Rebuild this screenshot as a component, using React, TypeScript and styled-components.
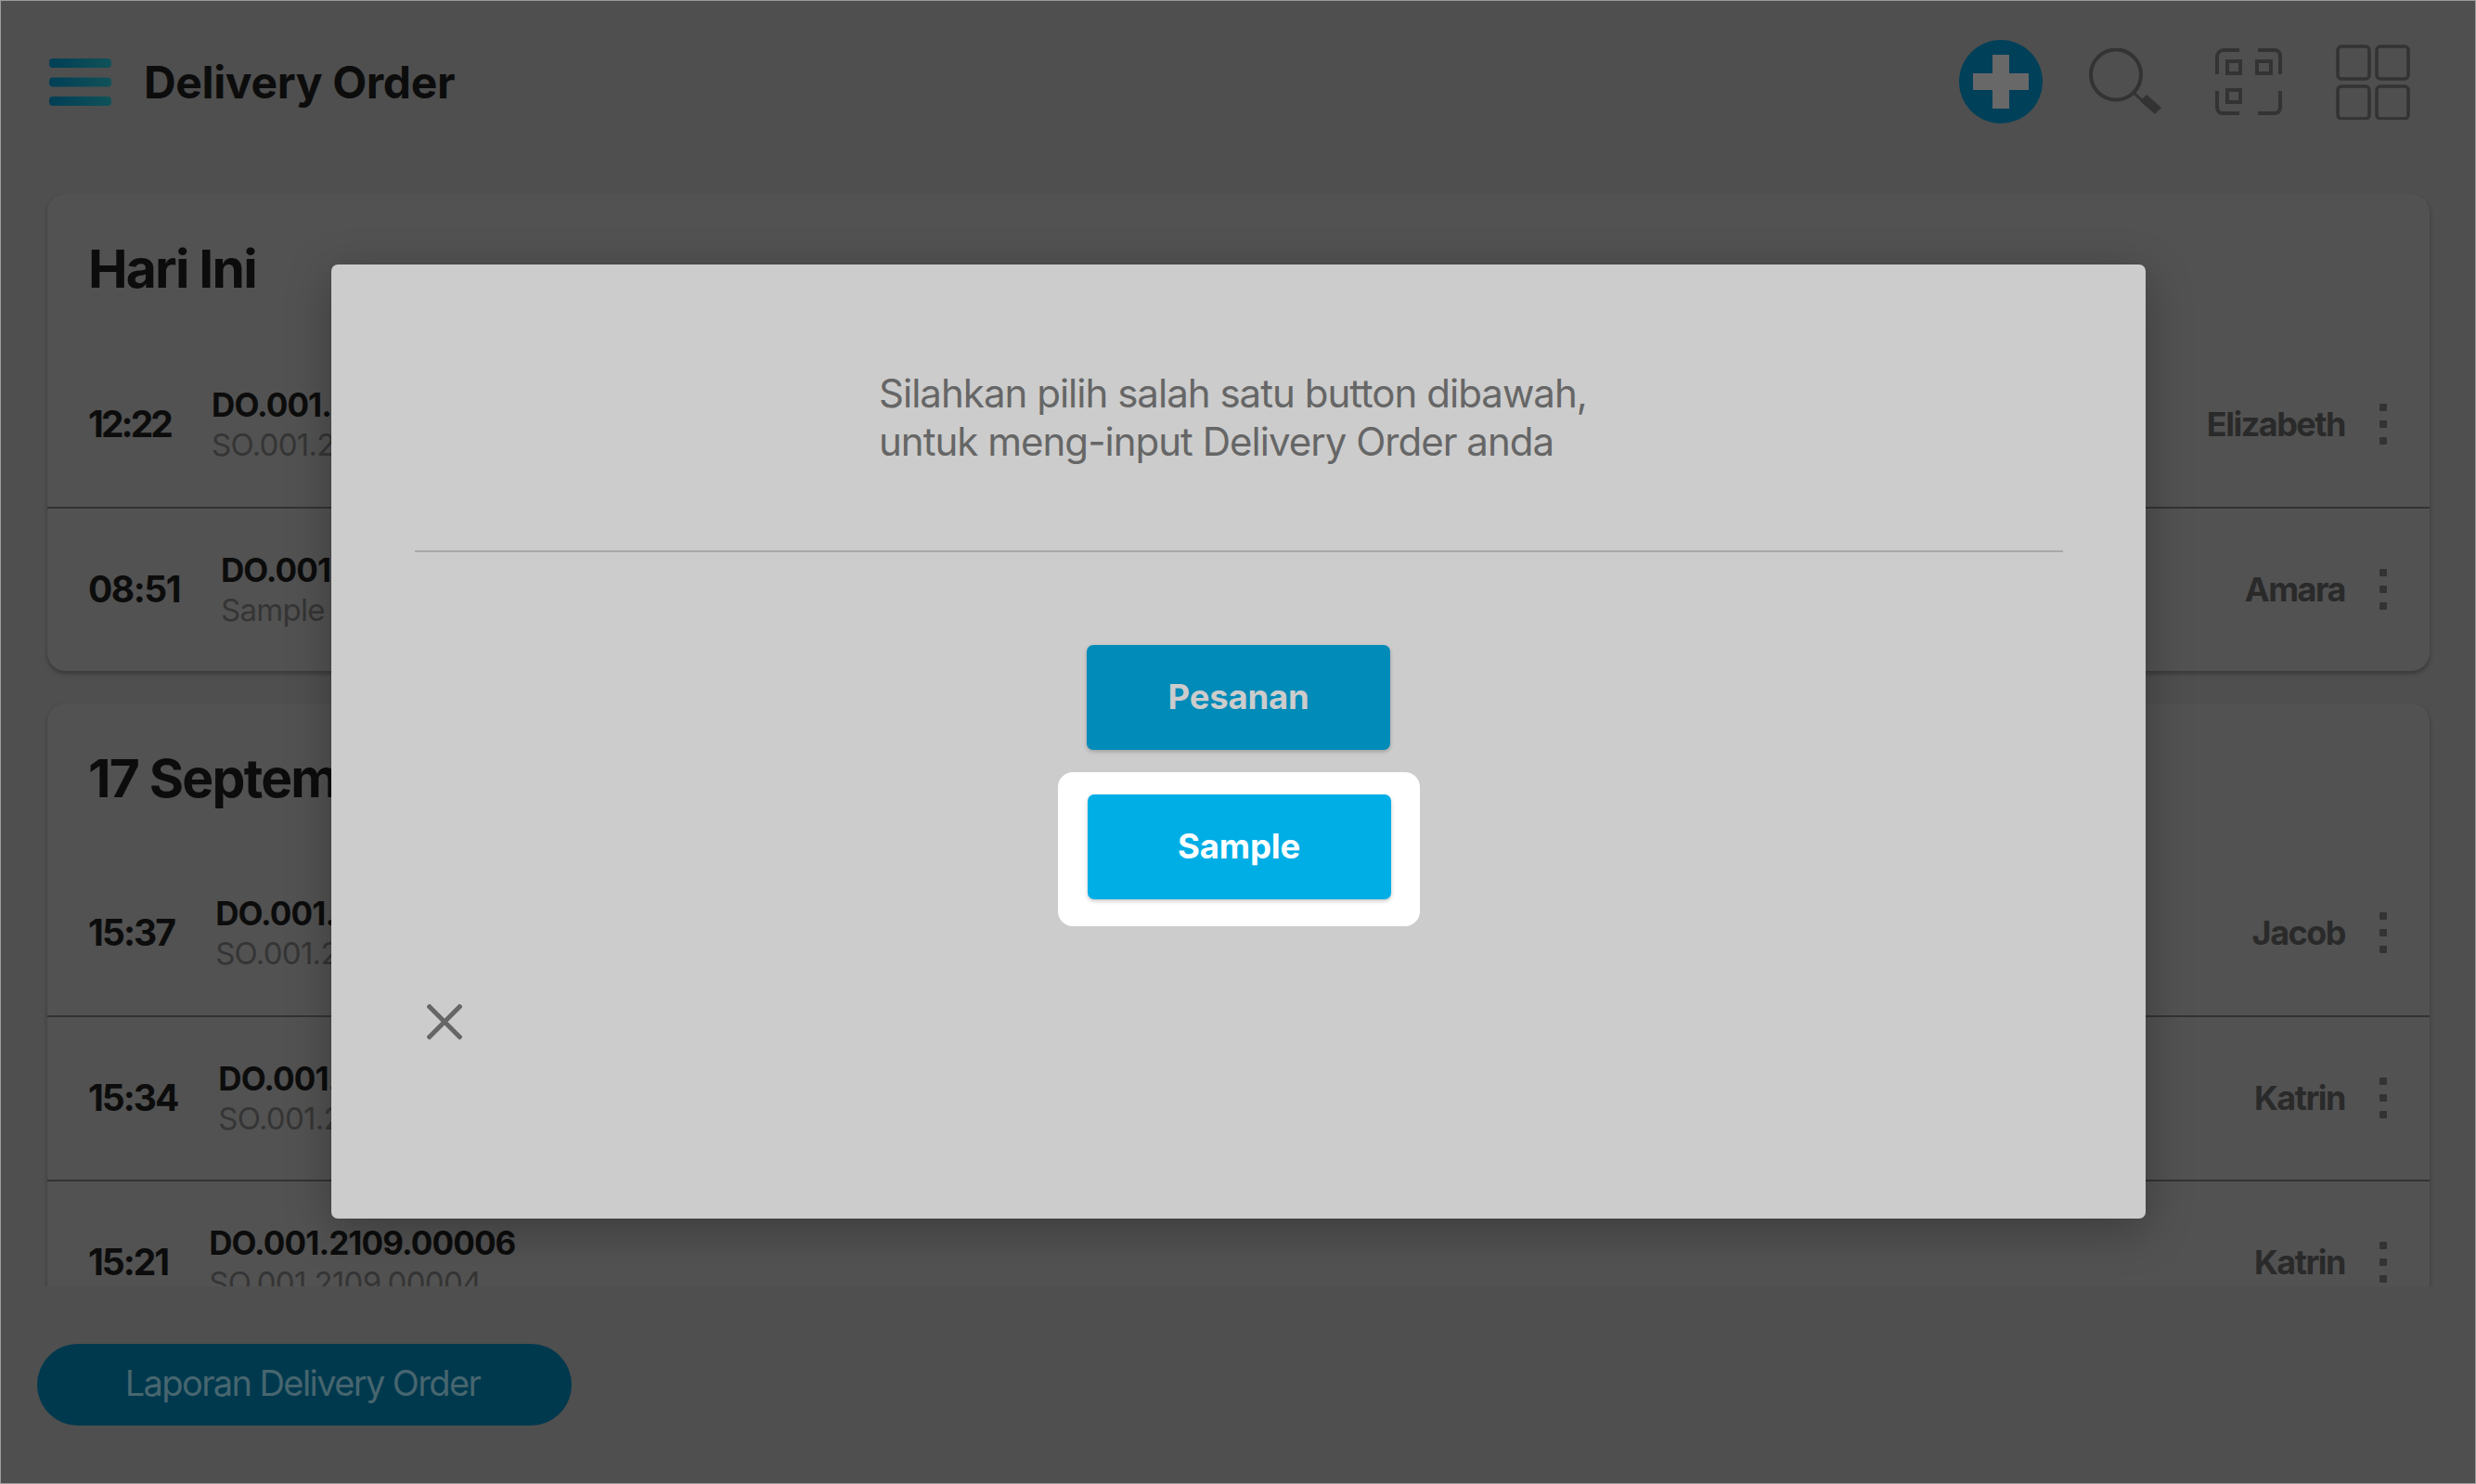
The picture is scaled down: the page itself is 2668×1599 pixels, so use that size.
import { createGlobalStyle, styled } from "styled-components";

const GlobalStyle = createGlobalStyle`
    html, body {
        margin: 0;
        padding: 0;
    }
    body {
        font-family: Inter, "Liberation Sans", sans-serif;
    }
`;

const Page = styled.div`
    position: relative;
    width: 2668px;
    height: 1599px;
    overflow: hidden;
    display: flex;
    flex-direction: column;
    background-color: #4f4f4f;
    box-shadow: inset 0 0 0 1px #9c9c9c;
`;
const Header = styled.header`
    height: 209px;
    flex-shrink: 0;
    display: flex;
    align-items: flex-start;
    justify-content: space-between;
    padding: 43px 71px 0 53px;
    box-sizing: border-box;
`;
const HeaderLeft = styled.div`
    display: flex;
    align-items: center;
    gap: 35px;
    height: 90px;
`;
const Title = styled.h1`
    margin: 0;
    font-size: 48px;
    font-weight: 700;
    letter-spacing: -0.35px;
    color: #0c0c0c;
`;
const HeaderIcons = styled.div`
    display: flex;
    align-items: center;
    height: 90px;
    gap: 58px;
`;
const PlusIcon = styled.svg`
    margin-right: -9px;
`;
const List = styled.div`
    height: 1177px;
    flex-shrink: 0;
    overflow: hidden;
    display: flex;
    flex-direction: column;
    gap: 35px;
    padding: 0 50px 0 51px;
`;
const Card = styled.section`
    flex-shrink: 0;
    background-color: #525252;
    border-radius: 20px;
    box-shadow: 0 3px 5px rgba(0, 0, 0, 0.28);
`;
const CardTitle = styled.h2<{ $height: number }>`
    margin: 0;
    height: ${(p) => p.$height}px;
    box-sizing: border-box;
    padding: 48px 0 0 44px;
    font-size: 57px;
    line-height: 66px;
    font-weight: 700;
    letter-spacing: -1.8px;
    color: #0c0c0c;
    white-space: nowrap;
`;
const Row = styled.div`
    height: 177px;
    box-sizing: border-box;
    display: flex;
    align-items: center;
    padding: 0 46px 0 44px;
    border-top: 2px solid #333;
    &:first-of-type {
        border-top: none;
    }
`;
const Time = styled.span<{ $spacing: number }>`
    font-size: 39px;
    font-weight: 700;
    letter-spacing: ${(p) => p.$spacing}px;
    color: #0c0c0c;
    margin: 0 44px 2px 0;
`;
const RowText = styled.div`
    flex: 1;
    display: flex;
    flex-direction: column;
    gap: 1px;
`;
const DoNumber = styled.span`
    font-size: 35px;
    line-height: 42px;
    font-weight: 700;
    letter-spacing: -0.9px;
    color: #0c0c0c;
`;
const SoNumber = styled.span`
    font-size: 33px;
    line-height: 42px;
    letter-spacing: -0.7px;
    color: #353535;
`;
const Person = styled.span`
    font-size: 36px;
    font-weight: 700;
    letter-spacing: -1.5px;
    color: #2a2a2a;
    margin: 0 37px 1px 0;
`;
const Dots = styled.div`
    display: flex;
    flex-direction: column;
    gap: 10px;
    margin-bottom: 2px;
    span {
        width: 8px;
        height: 8px;
        border-radius: 1px;
        background-color: #333;
    }
`;
const Footer = styled.footer`
    flex: 1;
    display: flex;
    align-items: flex-start;
    padding: 62px 0 0 40px;
`;
const ReportButton = styled.button`
    width: 576px;
    height: 88px;
    border: none;
    border-radius: 44px;
    background-color: #00394e;
    color: #47666f;
    font-family: inherit;
    font-size: 38px;
    letter-spacing: -1.6px;
    padding: 0 4px 5px 0;
`;
const Overlay = styled.div`
    position: absolute;
    inset: 0;
    padding: 285px 0 0 357px;
`;
const Modal = styled.div`
    width: 1955px;
    height: 1028px;
    box-sizing: border-box;
    display: flex;
    flex-direction: column;
    align-items: center;
    padding-top: 113px;
    background-color: #cccccc;
    border-radius: 7px;
    box-shadow: 0 12px 50px rgba(0, 0, 0, 0.28);
`;
const Message = styled.p`
    margin: 0;
    align-self: flex-start;
    padding-left: 590px;
    font-size: 42px;
    line-height: 52px;
    letter-spacing: -0.98px;
    color: #666;
`;
const Divider = styled.hr`
    width: 1776px;
    height: 2px;
    margin: 91px 0 100px;
    border: none;
    background-color: #a8a8a8;
`;
const ChoiceButton = styled.button<{ $active?: boolean }>`
    width: 327px;
    height: 113px;
    padding: 0 0 2px;
    border: none;
    border-radius: 7px;
    background-color: ${(p) => (p.$active ? "#00aee6" : "#008bb8")};
    color: ${(p) => (p.$active ? "#fff" : "#cccccc")};
    font-family: inherit;
    font-size: 36.5px;
    font-weight: 700;
    letter-spacing: -0.2px;
    box-shadow: 0 2px 4px rgba(0, 0, 0, 0.22);
`;
const Highlight = styled.div`
    margin-top: 24px;
    padding: 24px 31px 29px 32px;
    display: flex;
    background-color: #fff;
    border-radius: 16px;
`;
const CloseButton = styled.button`
    align-self: flex-start;
    margin: 81px 0 0 100px;
    width: 44px;
    height: 44px;
    padding: 0;
    border: none;
    background: none;
    color: #666;
    display: flex;
    align-items: center;
    justify-content: center;
`;

const rows = [
    {
        title: "Hari Ini",
        height: 160,
        items: [
            { time: "12:22", spacing: -2.9, no: "DO.001.2109.00008", sub: "SO.001.2109.00006", name: "Elizabeth" },
            { time: "08:51", spacing: -1.5, no: "DO.001.2109.00007", sub: "Sample", name: "Amara" },
        ],
    },
    {
        title: "17 September 2021",
        height: 159,
        items: [
            { time: "15:37", spacing: -1.9, no: "DO.001.2109.00006", sub: "SO.001.2109.00005", name: "Jacob" },
            { time: "15:34", spacing: -2, no: "DO.001.2109.00005", sub: "SO.001.2109.00004", name: "Katrin" },
            { time: "15:21", spacing: -2, no: "DO.001.2109.00006", sub: "SO.001.2109.00004", name: "Katrin" },
        ],
    },
];

export default function App() {
    return (
        <Page>
            <GlobalStyle />
            <Header>
                <HeaderLeft>
                    <svg width="67" height="51" viewBox="0 0 67 51" aria-hidden="true">
                        <defs>
                            <linearGradient id="menuBar" x1="0" x2="1" y1="0" y2="0">
                                <stop offset="0" stopColor="#003f56" />
                                <stop offset="1" stopColor="#105258" />
                            </linearGradient>
                        </defs>
                        <rect width="67" height="10" rx="4" fill="url(#menuBar)" />
                        <rect y="20.5" width="67" height="10" rx="4" fill="url(#menuBar)" />
                        <rect y="41" width="67" height="10" rx="4" fill="url(#menuBar)" />
                    </svg>
                    <Title>Delivery Order</Title>
                </HeaderLeft>
                <HeaderIcons>
                    <PlusIcon width="90" height="90" viewBox="0 0 90 90" aria-hidden="true">
                        <circle cx="45" cy="45" r="45" fill="#004059" />
                        <path d="M36 16h18v20h21v18H54v20H36V54H15V36h21z" fill="#686868" />
                    </PlusIcon>
                    <svg width="79" height="72" viewBox="0 0 79 72" aria-hidden="true">
                        <circle cx="30" cy="28.5" r="27" fill="none" stroke="#333" strokeWidth="4" />
                        <path d="M49 48l9 8" fill="none" stroke="#333" strokeWidth="3" />
                        <path d="M56 57l7-7 16 14-7 7z" fill="#333" />
                    </svg>
                    <svg width="72" height="72" viewBox="0 0 72 72" fill="none" stroke="#333" strokeWidth="4" aria-hidden="true">
                        <path d="M2 28V9a7 7 0 0 1 7-7h17" />
                        <path d="M46 2h18a6 6 0 0 1 6 6v20" />
                        <path d="M2 46v18a6 6 0 0 0 6 6h18" />
                        <path d="M70 46v18a6 6 0 0 1-6 6H46" />
                        <rect x="13" y="14" width="14" height="13" />
                        <rect x="45" y="14" width="15" height="13" />
                        <rect x="13" y="45" width="14" height="13" />
                    </svg>
                    <svg width="80" height="81" viewBox="0 0 80 81" fill="none" stroke="#333" strokeWidth="3.5" aria-hidden="true">
                        <rect x="2" y="2" width="34" height="35" rx="4" />
                        <rect x="44" y="2" width="34" height="35" rx="4" />
                        <rect x="2" y="45" width="34" height="35" rx="4" />
                        <rect x="44" y="45" width="34" height="35" rx="4" />
                    </svg>
                </HeaderIcons>
            </Header>
            <List>
                {rows.map((group) => (
                    <Card key={group.title}>
                        <CardTitle $height={group.height}>{group.title}</CardTitle>
                        {group.items.map((item) => (
                            <Row key={item.time}>
                                <Time $spacing={item.spacing}>{item.time}</Time>
                                <RowText>
                                    <DoNumber>{item.no}</DoNumber>
                                    <SoNumber>{item.sub}</SoNumber>
                                </RowText>
                                <Person>{item.name}</Person>
                                <Dots>
                                    <span />
                                    <span />
                                    <span />
                                </Dots>
                            </Row>
                        ))}
                    </Card>
                ))}
            </List>
            <Footer>
                <ReportButton>Laporan Delivery Order</ReportButton>
            </Footer>
            <Overlay>
                <Modal>
                    <Message>
                        Silahkan pilih salah satu button dibawah,
                        <br />
                        untuk meng-input Delivery Order anda
                    </Message>
                    <Divider />
                    <ChoiceButton>Pesanan</ChoiceButton>
                    <Highlight>
                        <ChoiceButton $active>Sample</ChoiceButton>
                    </Highlight>
                    <CloseButton aria-label="Tutup">
                        <svg width="38" height="38" viewBox="0 0 38 38" fill="none" stroke="currentColor" strokeWidth="5" aria-hidden="true">
                            <path d="M1 1l36 36M37 1L1 37" />
                        </svg>
                    </CloseButton>
                </Modal>
            </Overlay>
        </Page>
    );
}
